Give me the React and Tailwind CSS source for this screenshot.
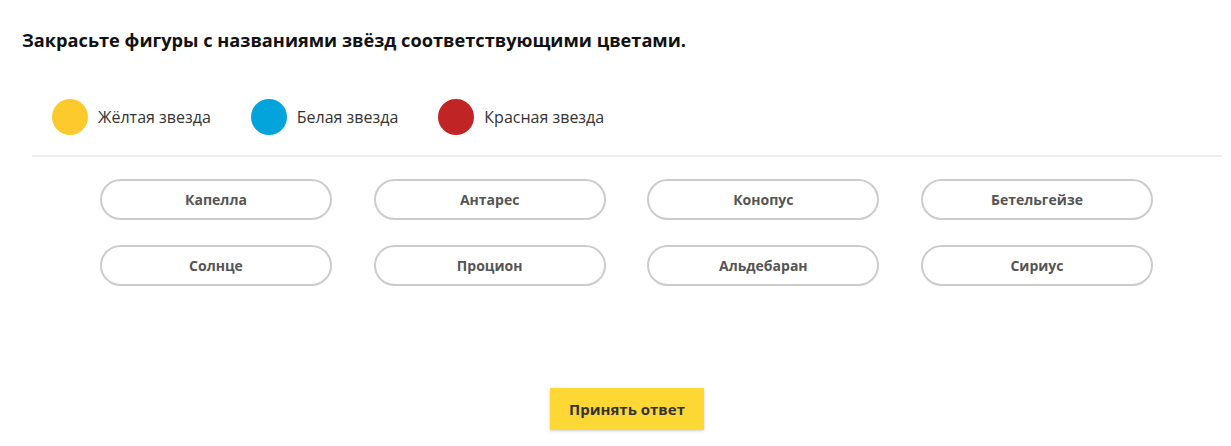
const legend = [
  { color: 'bg-[#fdca2e]', label: 'Жёлтая звезда' },
  { color: 'bg-[#03a3db]', label: 'Белая звезда' },
  { color: 'bg-[#c02424]', label: 'Красная звезда' },
]

const stars = ['Капелла', 'Антарес', 'Конопус', 'Бетельгейзе', 'Солнце', 'Процион', 'Альдебаран', 'Сириус']

export default function App() {
  return (
    <div className="w-[1231px] h-[446px] bg-white font-['Open_Sans',sans-serif] text-[#222]">
      <h1 className="pl-[22px] pt-[28px] text-[18.2px] leading-[24px] font-bold text-[#111]">
        Закрасьте фигуры с названиями звёзд соответствующими цветами.
      </h1>

      {/* Legend */}
      <div className="flex items-center gap-[40px] pl-[52px] pt-[47px] pb-[20px]">
        {legend.map(l => (
          <div key={l.label} className="flex items-center gap-[10px]">
            <div className={`w-[36px] h-[36px] rounded-full ${l.color}`} />
            <span className="text-[16px] text-[#333]">{l.label}</span>
          </div>
        ))}
      </div>

      <div className="ml-[32px] w-[1190px] border-t-2 border-[#eeeeee]">
        <div className="grid grid-cols-[repeat(4,232px)] justify-between gap-y-[25px] w-[1053px] ml-[68px] pt-[22px]">
          {stars.map(s => (
            <button
              key={s}
              className="h-[41px] rounded-full border-2 border-[#cccccc] bg-white text-[14px] font-bold text-[#555] flex items-center justify-center"
            >
              {s}
            </button>
          ))}
        </div>

        <div className="flex justify-center pt-[102px]">
          <button className="w-[154px] h-[42px] bg-[#fdd835] text-[15px] font-bold text-[#333] shadow-[0_1px_3px_rgba(0,0,0,0.2)]">
            Принять ответ
          </button>
        </div>
      </div>
    </div>
  )
}
